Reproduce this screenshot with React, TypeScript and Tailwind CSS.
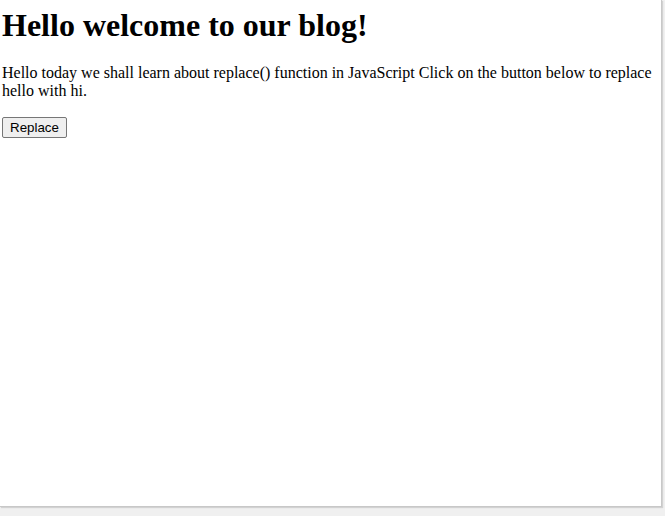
export default function App() {
  return (
    <div className="w-[665px] h-[516px] bg-[#f0f0f0] overflow-hidden">
      <div className="w-[662px] h-[507px] bg-white border-r border-b border-[#c8c8c8] shadow-[1px_1px_1px_rgba(0,0,0,0.12)] px-[2px] pt-[7px] text-black font-['Liberation_Serif','Times_New_Roman',serif]">
        <h1 className="text-[32px] font-bold leading-[37px] mb-[20px]">Hello welcome to our blog!</h1>
        <p className="text-[16px] leading-[18.4px] mb-[16px]">
          Hello today we shall learn about replace() function in JavaScript Click on the button below to replace hello with hi.
        </p>
        <button className="block font-['Liberation_Sans',Arial,sans-serif] text-[13.33px] leading-[17px] px-[7px] py-[1px] bg-[#efefef] border border-[#767676] rounded-[2px] text-black">
          Replace
        </button>
      </div>
    </div>
  );
}
